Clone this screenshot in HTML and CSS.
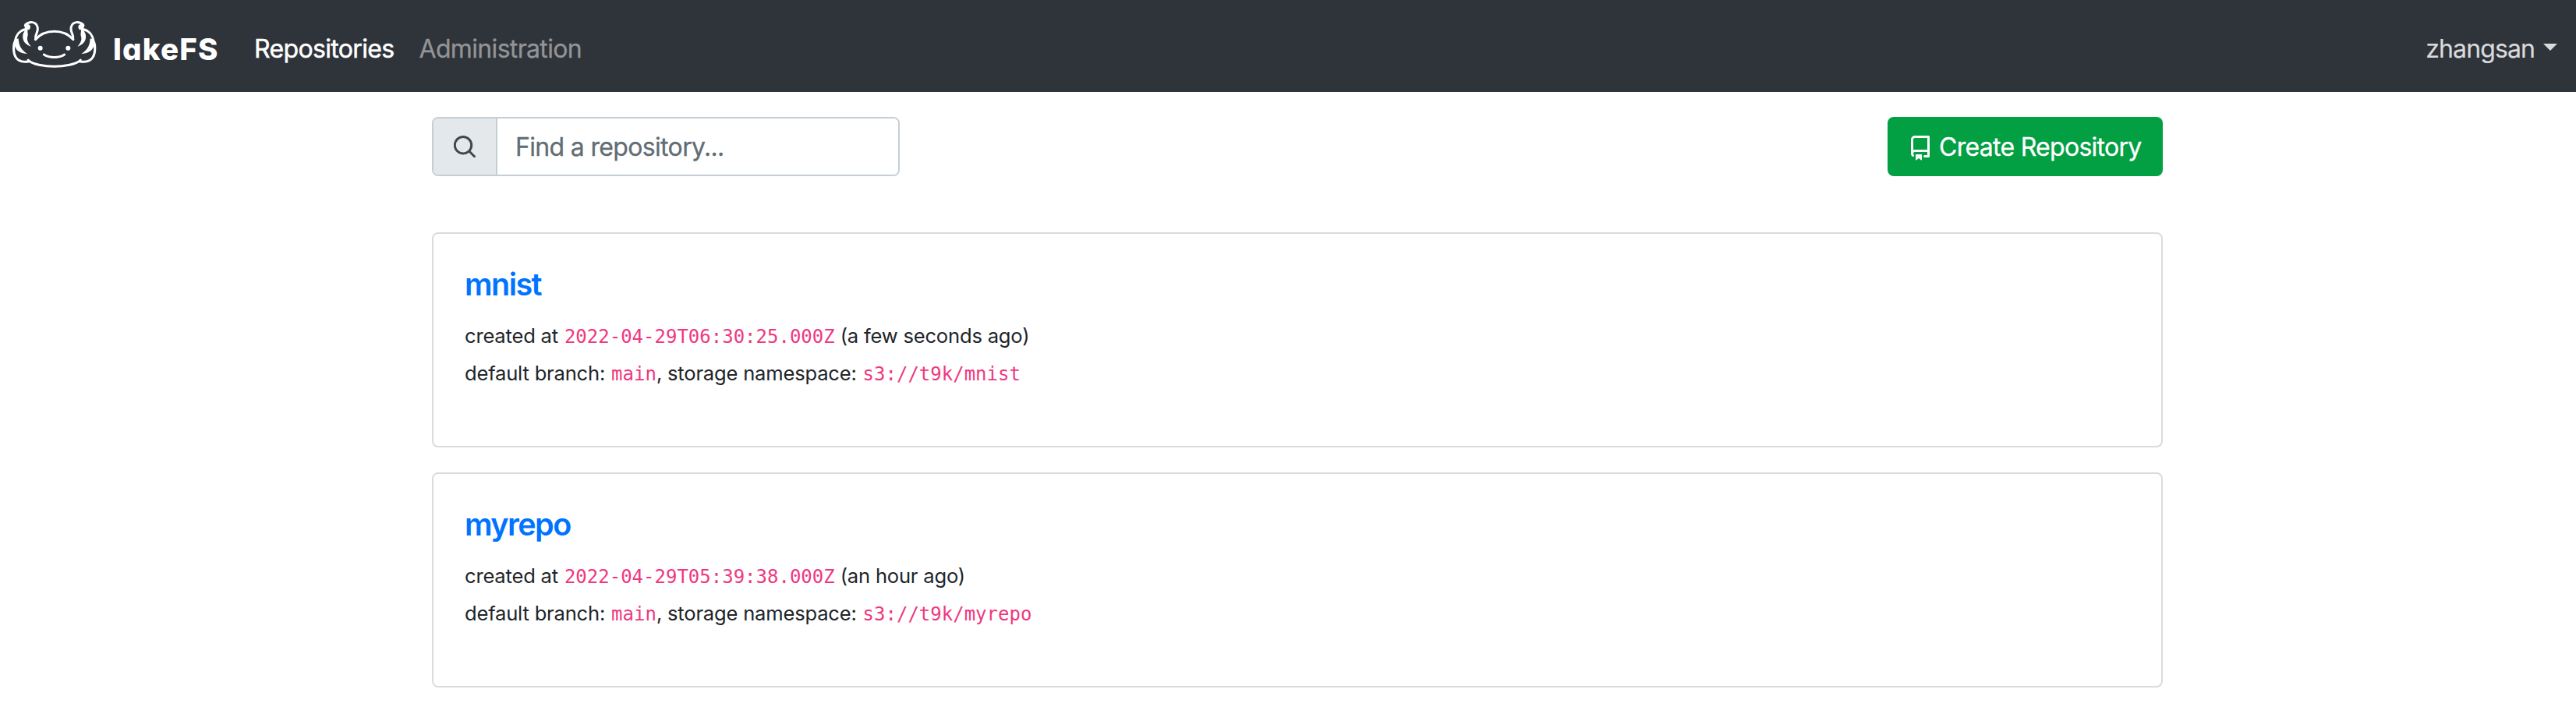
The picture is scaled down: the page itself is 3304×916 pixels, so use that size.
FILE: index.html
```
<!DOCTYPE html>
<html lang="en">
<head>
<meta charset="utf-8">
<title>lakeFS</title>
<link rel="stylesheet" href="styles.css">
</head>
<body>
<header class="navbar">
  <a class="brand">
    <svg class="brand-mark" viewBox="0 0 360 225" aria-hidden="true">
      <defs>
        <g id="gill">
          <path class="line" d="M108 90C101 76 120 64 114 43C108 22 83 21 68 35C80 35 86 40 80 50"/>
          <path class="line" d="M66 53C44 58 31 77 28 98C20 113 21 144 30 159C41 178 61 180 82 176"/>
          <path class="solid" d="M62 36L84 36L78 50C73 61 80 69 76 80C72 94 79 107 90 119C68 113 55 96 58 76C58 66 68 60 66 48Z"/>
          <path class="solid" d="M28 92L41 88C42 116 53 134 75 147C52 146 32 137 27 117Z"/>
        </g>
      </defs>
      <use href="#gill"/>
      <use href="#gill" transform="translate(358 0) scale(-1 1)"/>
      <path class="line" d="M106 92C143 50 215 50 252 92"/>
      <path class="line" d="M78 171C93 188 143 196 179 196C215 196 265 188 280 171"/>
      <path class="line" d="M139 150C161 164 197 164 218 150"/>
      <circle class="solid" cx="125" cy="125" r="9"/>
      <circle class="solid" cx="232" cy="125" r="9"/>
    </svg>
    <span class="brand-name">lakeFS</span>
  </a>
  <nav class="nav">
    <a class="nav-link active">Repositories</a>
    <a class="nav-link">Administration</a>
  </nav>
  <a class="user">zhangsan<span class="caret"></span></a>
</header>
<main class="container">
  <div class="toolbar">
    <label class="search">
      <span class="search-addon">
        <svg class="search-icon" viewBox="0 0 28 28"><circle cx="12" cy="12.2" r="10.7"/><path d="M19.8 20L26.5 26.8"/></svg>
      </span>
      <input class="search-input" type="text" placeholder="Find a repository...">
    </label>
    <button class="create">
      <svg class="repo-icon" viewBox="0 0 16 16"><path fill-rule="evenodd" d="M2 2.5A2.5 2.5 0 014.5 0h8.75a.75.75 0 01.75.75v12.5a.75.75 0 01-.75.75h-2.5a.75.75 0 110-1.5h1.75v-2h-8a1 1 0 00-.714 1.7.75.75 0 01-1.072 1.05A2.495 2.495 0 012 11.5v-9zm10.5-1V9h-8c-.356 0-.694.074-1 .208V2.5a1 1 0 011-1h8zM5 12.25v3.25a.25.25 0 00.4.2l1.45-1.087a.25.25 0 01.3 0L8.6 15.7a.25.25 0 00.4-.2v-3.25a.25.25 0 00-.25-.25h-3.5a.25.25 0 00-.25.25z"/></svg>
      <span class="create-label">Create Repository</span>
    </button>
  </div>
  <section class="card">
    <h2 class="title">mnist</h2>
    <p class="meta">created at <code>2022-04-29T06:30:25.000Z</code> (a few seconds ago)</p>
    <p class="meta">default branch: <code>main</code>, storage namespace: <code>s3://t9k/mnist</code></p>
  </section>
  <section class="card">
    <h2 class="title">myrepo</h2>
    <p class="meta">created at <code>2022-04-29T05:39:38.000Z</code> (an hour ago)</p>
    <p class="meta">default branch: <code>main</code>, storage namespace: <code>s3://t9k/myrepo</code></p>
  </section>
</main>
</body>
</html>
```
FILE: styles.css
```
* { box-sizing: border-box; }
body {
  margin: 0;
  background: #fff;
  color: #212529;
  font: 32px/48px Inter, "Liberation Sans", sans-serif;
}
.navbar {
  display: flex;
  height: 118px;
  padding: 0 24px 0 10px;
  background: #2f333a;
}
.brand { display: flex; width: 314px; }
.brand-mark { width: 120px; height: 75px; margin-top: 20px; }
.brand-mark .line {
  fill: none;
  stroke: #fff;
  stroke-width: 9;
  stroke-linecap: round;
  stroke-linejoin: round;
}
.brand-mark .solid { fill: #fff; }
.brand-name {
  margin: 39px 0 0 15px;
  color: #fff;
  font-size: 38.5px;
  font-weight: 800;
  letter-spacing: 1.2px;
  font-feature-settings: "cv11";
}
.nav { display: flex; flex: 1; gap: 32px; padding: 39px 0 0 2px; }
.nav-link { color: #929496; letter-spacing: -.66px; -webkit-text-stroke: .3px; }
.nav-link.active { color: #fff; -webkit-text-stroke: .5px #fff; }
.user {
  display: flex;
  padding-top: 39px;
  color: #d9dadb;
  letter-spacing: -.9px;
  -webkit-text-stroke: .2px;
}
.caret {
  margin: 17px 0 0 11px;
  width: 18px;
  height: 9px;
  background: #d9dadb;
  clip-path: polygon(0 0, 100% 0, 50% 100%);
}
.container { width: 2220px; margin: 0 0 0 554px; padding-top: 32px; }
.toolbar {
  display: flex;
  justify-content: space-between;
  height: 76px;
  margin-bottom: 72px;
}
.search {
  display: flex;
  width: 600px;
  border: 2px solid #c5ced5;
  border-radius: 8px;
  overflow: hidden;
}
.search-addon {
  display: flex;
  align-items: center;
  width: 82px;
  padding-left: 26px;
  background: #e4e8eb;
  border-right: 2px solid #c5ced5;
}
.search-icon {
  width: 28px;
  height: 28px;
  fill: none;
  stroke: #41474e;
  stroke-width: 3;
  stroke-linecap: round;
}
.search-input {
  flex: 1;
  min-width: 0;
  padding: 2px 23px 0;
  border: 0;
  background: #fff;
  font: inherit;
  letter-spacing: -.66px;
}
.search-input::placeholder { color: #626d74; opacity: 1; -webkit-text-stroke: .3px; }
.create {
  display: flex;
  align-items: center;
  width: 353px;
  padding: 0 0 0 26px;
  border: 0;
  border-radius: 8px;
  background: #029f43;
  color: #fff;
  font: inherit;
  letter-spacing: -.71px;
}
.create-label { padding-top: 2px; -webkit-text-stroke: .3px; }
.repo-icon { width: 32px; height: 32px; margin: 4px 8px 0 0; fill: #fff; }
.card {
  height: 276px;
  margin-bottom: 32px;
  padding: 41px 40px 40px;
  border: 2px solid #dbdbdb;
  border-radius: 8px;
}
.title {
  margin: 0 0 18px;
  color: #0073ff;
  font-size: 39.5px;
  line-height: 48px;
  font-weight: 600;
  letter-spacing: -1.55px;
}
.meta {
  margin: 0;
  font-size: 25.6px;
  line-height: 48px;
  letter-spacing: -.21px;
}
.meta code {
  color: #f0387f;
  font: 24px/1 "DejaVu Sans Mono", monospace;
  letter-spacing: 0;
  margin-left: 1px;
}
```
